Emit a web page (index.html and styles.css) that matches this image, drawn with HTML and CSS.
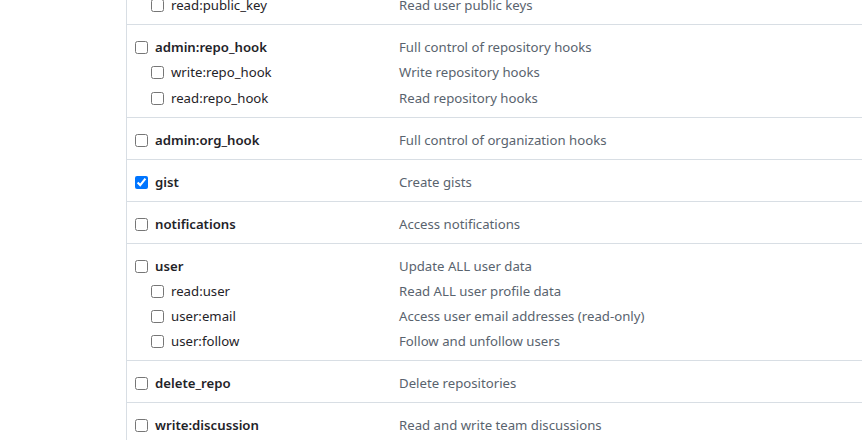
FILE: index.html
```html
<!DOCTYPE html>
<html lang="en">
<head>
<meta charset="utf-8">
<title>Scopes</title>
<link rel="stylesheet" href="styles.css">
</head>
<body>
<div class="scopes">
  <div class="group">
    <div class="row sub"><label class="name"><input type="checkbox">read:public_key</label><span class="desc">Read user public keys</span></div>
  </div>
  <div class="group">
    <div class="row"><label class="name"><input type="checkbox">admin:repo_hook</label><span class="desc">Full control of repository hooks</span></div>
    <div class="row sub"><label class="name"><input type="checkbox">write:repo_hook</label><span class="desc">Write repository hooks</span></div>
    <div class="row sub"><label class="name"><input type="checkbox">read:repo_hook</label><span class="desc">Read repository hooks</span></div>
  </div>
  <div class="group">
    <div class="row"><label class="name"><input type="checkbox">admin:org_hook</label><span class="desc">Full control of organization hooks</span></div>
  </div>
  <div class="group">
    <div class="row"><label class="name"><input type="checkbox" checked>gist</label><span class="desc">Create gists</span></div>
  </div>
  <div class="group">
    <div class="row"><label class="name"><input type="checkbox">notifications</label><span class="desc">Access notifications</span></div>
  </div>
  <div class="group">
    <div class="row"><label class="name"><input type="checkbox">user</label><span class="desc">Update ALL user data</span></div>
    <div class="row sub"><label class="name"><input type="checkbox">read:user</label><span class="desc">Read ALL user profile data</span></div>
    <div class="row sub"><label class="name"><input type="checkbox">user:email</label><span class="desc">Access user email addresses (read-only)</span></div>
    <div class="row sub"><label class="name"><input type="checkbox">user:follow</label><span class="desc">Follow and unfollow users</span></div>
  </div>
  <div class="group">
    <div class="row"><label class="name"><input type="checkbox">delete_repo</label><span class="desc">Delete repositories</span></div>
  </div>
  <div class="group">
    <div class="row"><label class="name"><input type="checkbox">write:discussion</label><span class="desc">Read and write team discussions</span></div>
  </div>
</div>
</body>
</html>
```

FILE: styles.css
```css
html, body {
  margin: 0;
  padding: 0;
  background: #ffffff;
}
body {
  font-family: "Noto Sans", "Open Sans", sans-serif;
  font-size: 13.2px;
  color: #1f2328;
  overflow: hidden;
}
.scopes {
  margin-left: 126px;
  margin-top: -17px;
  border-left: 1px solid #d8dee4;
}
.group {
  padding: 12px 0 8px 8px;
  border-bottom: 1px solid #d8dee4;
  display: flex;
  flex-direction: column;
  gap: 4.3px;
}
.row {
  display: grid;
  grid-template-columns: 264px 1fr;
  line-height: 21px;
  height: 21px;
}
.name {
  display: flex;
  align-items: center;
  font-weight: 600;
  white-space: nowrap;
}
.sub .name {
  padding-left: 16px;
  font-weight: 400;
}
.name input {
  margin: 0 7px 0 0;
  width: 13px;
  height: 13px;
}
.desc {
  color: #59636e;
  white-space: nowrap;
}
```
